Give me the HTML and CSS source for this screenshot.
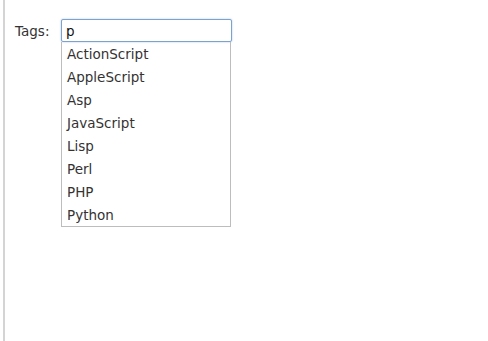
FILE: index.html
```html
<!DOCTYPE html>
<html lang="en">
<head>
  <meta charset="UTF-8" />
  <title>Tags</title>
  <link rel="stylesheet" href="styles.css">
</head>
<body>
  <div class="page">
    <div class="tag-row">
      <label for="tags" class="tag-label">Tags:</label>
      <div class="field">
        <input id="tags" class="tag-input" type="text" value="p" autocomplete="off">
        <ul class="suggestions">
          <li>ActionScript</li>
          <li>AppleScript</li>
          <li>Asp</li>
          <li>JavaScript</li>
          <li>Lisp</li>
          <li>Perl</li>
          <li>PHP</li>
          <li>Python</li>
        </ul>
      </div>
    </div>
  </div>
</body>
</html>
```

FILE: styles.css
```css
html, body {
  margin: 0;
  height: 100%;
  background: #fff;
}
body {
  font-family: "DejaVu Sans", Verdana, sans-serif;
  font-size: 13.5px;
  color: #333;
}
.page {
  height: 100%;
  margin-left: 3px;
  border-left: 2px solid #d4d4d4;
  padding: 19px 0 0 10px;
  box-sizing: border-box;
}
.tag-row {
  display: flex;
  align-items: flex-start;
}
.tag-label {
  width: 46px;
  line-height: 23px;
  padding-top: 1px;
  color: #333;
}
.field {
  width: 171px;
}
.tag-input {
  display: block;
  width: 171px;
  height: 23px;
  box-sizing: border-box;
  margin: 0;
  padding: 1px 4px 0;
  border: 1px solid #7da2ce;
  border-radius: 2px;
  box-shadow: 0 0 2px #a9c3e6;
  font: inherit;
  color: #111;
  outline: none;
}
.suggestions {
  list-style: none;
  margin: 0;
  padding: 0;
  width: 170px;
  border: 1px solid #bdbdbd;
  border-top: none;
  box-sizing: border-box;
}
.suggestions li {
  height: 23px;
  line-height: 23px;
  padding: 1px 0 0 5px;
  box-sizing: border-box;
  color: #333;
}
```
